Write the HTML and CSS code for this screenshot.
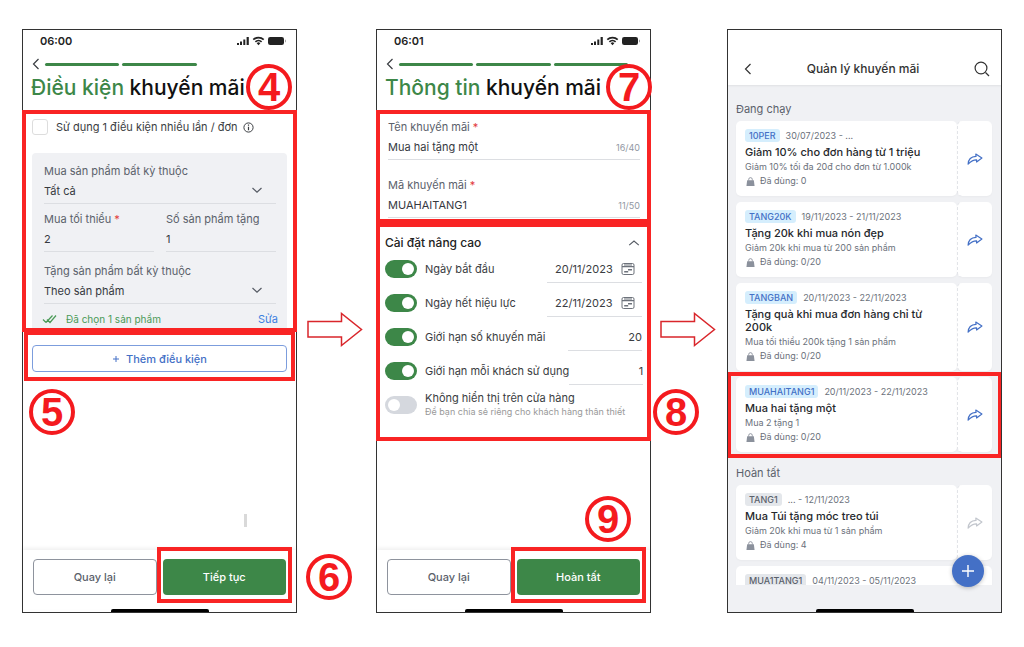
FILE: index.html
```html
<!DOCTYPE html>
<html lang="vi">
<head>
<meta charset="utf-8">
<meta name="viewport" content="width=device-width, initial-scale=1">
<title>Quản lý khuyến mãi</title>
<link rel="stylesheet" href="styles.css">
</head>
<body>
<svg class="sprite" aria-hidden="true">
  <symbol id="status" viewBox="0 0 50 12">
    <path d="M0 8h2v2H0zM3 6.500h2V10H3zM6.300 4.500h2V10h-2zM9.600 2h2.200v8H9.600z"/>
    <path d="M16.300 4.700a7.400 7.400 0 0 1 10.400 0M18.400 6.900a4.400 4.400 0 0 1 6.200 0" fill="none" stroke="currentColor" stroke-width="1.700"/>
    <path d="M19.700 8.300a2.500 2.500 0 0 1 3.600 0L21.500 10.200z"/>
    <rect x="31" y="2" width="16" height="8" rx="2.200"/>
    <path d="M48 4.500v3c1.200-.4 1.200-2.600 0-3z" opacity=".5"/>
  </symbol>
  <symbol id="back" viewBox="0 0 8 12"><path d="M6.500 1 1.500 6l5 5" fill="none" stroke="currentColor" stroke-width="1.200"/></symbol>
  <symbol id="down" viewBox="0 0 12 8"><path d="M1.500 2 6 6.200 10.500 2" fill="none" stroke="currentColor" stroke-width="1.200"/></symbol>
  <symbol id="up" viewBox="0 0 12 8"><path d="M1.200 6.200 6 2l4.800 4.200" fill="none" stroke="currentColor" stroke-width="1.100"/></symbol>
  <symbol id="calendar" viewBox="0 0 14 14"><g fill="none" stroke="currentColor"><rect x="1" y="1.500" width="12" height="11" rx="1.500"/><path d="M1 4.700h12M3 3h8" stroke-width="1.200"/><path d="M3.200 9.800h4M7 7.800h4" stroke-width="1.500"/></g></symbol>
  <symbol id="bag" viewBox="0 0 10 10"><path d="M3 4V2.700a2 2 0 0 1 4 0V4" fill="none" stroke="currentColor"/><path d="M1.300 3.500h7.400L9.500 10h-9z"/></symbol>
  <symbol id="share" viewBox="0 0 16 12"><path d="M8.800 1 14.900 5 9.600 9V6.900C6 6.700 4 8.300 1.100 11.200 1.300 6.700 4 3.700 9 3.400z" fill="none" stroke="currentColor" stroke-width="1.200" stroke-linejoin="round"/></symbol>
  <symbol id="arrow" viewBox="0 0 56 36"><path d="M1 9.500h33.500V1.500L54.500 17.500 34.500 33.500V25H1z" fill="none" stroke="#d9262b" stroke-width="1.500"/></symbol>
</svg>
<main class="flow">
  <section class="phone">
    <header>
      <div class="status"><span>06:00</span><svg class="status-icons"><use href="#status"/></svg></div>
      <div class="progress"><button class="plain" aria-label="Quay lại"><svg class="i-back"><use href="#back"/></svg></button><i class="bar"></i><i class="bar"></i><i></i></div>
      <h1 class="title"><em>Điều kiện</em> khuyến mãi</h1>
      <b class="step step-4">4</b>
    </header>
    <form class="region conditions">
      <label class="check"><input type="checkbox"><span>Sử dụng 1 điều kiện nhiều lần / đơn</span><svg class="i-info" viewBox="0 0 11 11"><circle cx="5.500" cy="5.500" r="4.600" fill="none" stroke="currentColor"/><path d="M5.500 2.500v1.300M5.500 4.800v3.400" stroke="currentColor" stroke-width="1.200"/></svg></label>
      <div class="panel">
        <label class="field"><span>Mua sản phẩm bất kỳ thuộc</span><span class="pick"><select><option>Tất cả</option></select><svg class="i-down"><use href="#down"/></svg></span></label>
        <div class="pair">
          <label class="field"><span>Mua tối thiểu <sup>*</sup></span><input type="text" value="2"></label>
          <label class="field"><span>Số sản phẩm tặng</span><input type="text" value="1"></label>
        </div>
        <label class="field gift"><span>Tặng sản phẩm bất kỳ thuộc</span><span class="pick"><select><option>Theo sản phẩm</option></select><svg class="i-down"><use href="#down"/></svg></span></label>
        <div class="chosen"><svg class="i-checks" viewBox="0 0 15 10"><path d="M1 5.500l3 3M5 5.500l3 3L14 1.500M4 8.500 10.500 1.500" fill="none" stroke="currentColor" stroke-width="1.200"/></svg><span>Đã chọn 1 sản phẩm</span><a href="#sua">Sửa</a></div>
      </div>
    </form>
    <div class="region add">
      <button class="add-button"><svg class="i-plus" viewBox="0 0 8 8"><path d="M4 1v6M1 4h6" stroke="currentColor"/></svg>Thêm điều kiện</button>
      <b class="step step-5">5</b>
    </div>
    <i class="handle"></i>
    <footer class="actions">
      <button class="secondary">Quay lại</button>
      <span class="region primary-wrap"><button class="primary">Tiếp tục</button><b class="step step-6">6</b></span>
    </footer>
    <i class="home"></i>
  </section>

  <svg class="arrow"><use href="#arrow"/></svg>

  <section class="phone">
    <header>
      <div class="status"><span>06:01</span><svg class="status-icons"><use href="#status"/></svg></div>
      <div class="progress"><button class="plain" aria-label="Quay lại"><svg class="i-back"><use href="#back"/></svg></button><i class="bar"></i><i class="bar"></i><i class="bar"></i></div>
      <h1 class="title"><em>Thông tin</em> khuyến mãi</h1>
      <b class="step step-7">7</b>
    </header>
    <form class="region info">
      <label class="field"><span>Tên khuyến mãi <sup>*</sup></span><span class="counted"><input type="text" value="Mua hai tặng một"><small>16/40</small></span></label>
      <label class="field"><span>Mã khuyến mãi <sup>*</sup></span><span class="counted"><input type="text" value="MUAHAITANG1"><small>11/50</small></span></label>
    </form>
    <form class="region advanced">
      <h2 class="advanced-head">Cài đặt nâng cao<button type="button" class="plain" aria-label="Thu gọn"><svg class="i-down"><use href="#up"/></svg></button></h2>
      <div class="setting"><input class="toggle" type="checkbox" id="t1" checked><label for="t1">Ngày bắt đầu</label><span class="date"><input type="text" aria-label="Ngày bắt đầu" value="20/11/2023"><svg class="i-cal"><use href="#calendar"/></svg></span></div>
      <div class="setting"><input class="toggle" type="checkbox" id="t2" checked><label for="t2">Ngày hết hiệu lực</label><span class="date"><input type="text" aria-label="Ngày hết hiệu lực" value="22/11/2023"><svg class="i-cal"><use href="#calendar"/></svg></span></div>
      <div class="setting"><input class="toggle" type="checkbox" id="t3" checked><label for="t3">Giới hạn số khuyến mãi</label><input class="amount" type="text" aria-label="Giới hạn số khuyến mãi" value="20"></div>
      <div class="setting"><input class="toggle" type="checkbox" id="t4" checked><label for="t4">Giới hạn mỗi khách sử dụng</label><input class="amount" type="text" aria-label="Giới hạn mỗi khách sử dụng" value="1"></div>
      <div class="setting"><input class="toggle" type="checkbox" id="t5"><label for="t5">Không hiển thị trên cửa hàng<small>Để bạn chia sẻ riêng cho khách hàng thân thiết</small></label></div>
      <b class="step step-8">8</b>
    </form>
    <footer class="actions">
      <button class="secondary">Quay lại</button>
      <span class="region primary-wrap"><button class="primary">Hoàn tất</button><b class="step step-9">9</b></span>
    </footer>
    <i class="home"></i>
  </section>

  <svg class="arrow"><use href="#arrow"/></svg>

  <section class="phone manage">
    <header class="manage-head">
      <button class="plain" aria-label="Quay lại"><svg class="i-back"><use href="#back"/></svg></button>
      <h1>Quản lý khuyến mãi</h1>
      <button class="plain" aria-label="Tìm kiếm"><svg class="i-search" viewBox="0 0 16 16"><path d="M11.500 11.500 15 15" stroke="currentColor" stroke-width="1.200"/><circle cx="7" cy="7" r="5.900" fill="none" stroke="currentColor" stroke-width="1.200"/></svg></button>
    </header>
    <div class="list">
      <h2>Đang chạy</h2>
      <article class="promo"><div class="body"><p class="meta"><mark>10PER</mark>30/07/2023 - ...</p><h3>Giảm 10% cho đơn hàng từ 1 triệu</h3><p>Giảm 10% tối đa 20đ cho đơn từ 1.000k</p><p class="used"><svg class="i-bag"><use href="#bag"/></svg>Đã dùng: 0</p></div><button class="share" aria-label="Chia sẻ"><svg class="i-share"><use href="#share"/></svg></button></article>
      <article class="promo"><div class="body"><p class="meta"><mark>TANG20K</mark>19/11/2023 - 21/11/2023</p><h3>Tặng 20k khi mua nón đẹp</h3><p>Giảm 20k khi mua từ 200 sản phẩm</p><p class="used"><svg class="i-bag"><use href="#bag"/></svg>Đã dùng: 0/20</p></div><button class="share" aria-label="Chia sẻ"><svg class="i-share"><use href="#share"/></svg></button></article>
      <article class="promo"><div class="body"><p class="meta"><mark>TANGBAN</mark>20/11/2023 - 22/11/2023</p><h3>Tặng quà khi mua đơn hàng chỉ từ 200k</h3><p>Mua tối thiểu 200k tặng 1 sản phẩm</p><p class="used"><svg class="i-bag"><use href="#bag"/></svg>Đã dùng: 0/20</p></div><button class="share" aria-label="Chia sẻ"><svg class="i-share"><use href="#share"/></svg></button></article>
      <article class="promo region"><div class="body"><p class="meta"><mark>MUAHAITANG1</mark>20/11/2023 - 22/11/2023</p><h3>Mua hai tặng một</h3><p>Mua 2 tặng 1</p><p class="used"><svg class="i-bag"><use href="#bag"/></svg>Đã dùng: 0/20</p></div><button class="share" aria-label="Chia sẻ"><svg class="i-share"><use href="#share"/></svg></button></article>
      <h2 class="ended-title">Hoàn tất</h2>
      <article class="promo ended"><div class="body"><p class="meta"><mark>TANG1</mark>... - 12/11/2023</p><h3>Mua Túi tặng móc treo túi</h3><p>Giảm 20k khi mua từ 1 sản phẩm</p><p class="used"><svg class="i-bag"><use href="#bag"/></svg>Đã dùng: 4</p></div><button class="share" aria-label="Chia sẻ"><svg class="i-share"><use href="#share"/></svg></button></article>
      <article class="promo ended"><div class="body"><p class="meta"><mark>MUA1TANG1</mark>04/11/2023 - 05/11/2023</p></div><button class="share" aria-label="Chia sẻ"></button></article>
    </div>
    <button class="fab" aria-label="Thêm khuyến mãi"><svg class="i-fab" viewBox="0 0 12 12"><path d="M6 0v12M0 6h12" stroke="currentColor" stroke-width="1.400"/></svg></button>
    <i class="home"></i>
  </section>
</main>
</body>
</html>
```
FILE: styles.css
```css
* { box-sizing: border-box; }
body {
  margin: 0;
  background: #fff;
  color: #3a3d42;
  font: 400 11px/18px Inter, "Noto Sans", sans-serif;
}
svg { display: block; flex: none; fill: currentColor; }
.sprite { display: none; }
h1, h2, h3, p { margin: 0; font-size: inherit; font-weight: 500; }
p { font-weight: 400; }
input, select, button { font: inherit; color: inherit; margin: 0; padding: 0; border: 0; background: none; border-radius: 0; min-width: 0; }
select, input { appearance: none; outline: 0; width: 100%; }
.plain { display: flex; }

.flow {
  display: grid;
  grid-template-columns: 1fr 79px 1fr 76px 1fr;
  height: 100vh;
  min-height: 647px;
  padding: 29px 22px 34px;
}
.phone {
  position: relative;
  display: flex;
  flex-direction: column;
  min-width: 0;
  min-height: 0;
  border: 1px solid #333;
}
.phone header { position: relative; }
.arrow { width: 56px; height: 36px; place-self: center; margin: 18px 3px 0 0; }

/* Red annotations */
.region { position: relative; }
.region::after {
  content: "";
  position: absolute;
  inset: 0 -1px;
  border: 4px solid #f92424;
  pointer-events: none;
}
.add::after { inset: -1px 1px 0; }
.primary-wrap::after { inset: -12px -6px -8px; }
.promo.region::after { inset: -5px -10px -6px -9px; }
.step {
  position: absolute;
  z-index: 2;
  width: 46px;
  height: 46px;
  border: 4px solid #f41a1e;
  border-radius: 50%;
  color: #f41a1e;
  font: 700 40px/38px "Liberation Sans", Arial, sans-serif;
  text-align: center;
}
.step-4 { right: 4px; bottom: 0; }
.step-5 { left: 6px; top: 57px; }
.step-6 { right: -66px; top: -5px; }
.step-7 { right: -2px; bottom: 0; }
.step-8 { right: -49px; bottom: 6px; }
.step-9 { right: 9px; top: -63px; }

/* Wizard header */
.status {
  display: flex;
  justify-content: space-between;
  align-items: center;
  height: 22px;
  padding: 0 9px 0 17px;
  color: #222;
  font-weight: 600;
}
.status-icons { width: 50px; height: 12px; }
.progress {
  display: grid;
  grid-template-columns: 10px 1fr 1fr 1fr;
  gap: 3px;
  align-items: center;
  height: 24px;
  padding: 0 22px 0 9px;
}
.bar { height: 3px; border-radius: 2px; background: #3d8748; }
.i-back { width: 8px; height: 12px; }
.title {
  margin-bottom: 10px;
  padding-left: 8px;
  color: #111;
  font-size: 21px;
  font-weight: 500;
  line-height: 24px;
  white-space: nowrap;
}
.title em { color: #3d8748; font-style: normal; }

/* Form fields */
.conditions { padding: 9px 9px 0; }
.check { display: flex; align-items: center; gap: 8px; height: 16px; margin-bottom: 18px; }
.check input { width: 16px; height: 16px; border: 1px solid #ddd; border-radius: 3px; }
.check svg { margin-left: -3px; }
.i-info { width: 11px; height: 11px; }
.panel { padding: 9px 11px 5px 12px; background: #f0f1f4; border-radius: 4px 4px 0 0; }
.field { display: block; min-width: 0; color: #5b616b; }
.field > span:first-child { display: block; white-space: nowrap; }
.field sup { color: #e23a3a; font-size: inherit; line-height: 1; vertical-align: baseline; }
.field input, .field select { height: 24px; padding-bottom: 2px; border-bottom: 1px solid #dcdee2; color: #36393f; }
.pair { display: grid; grid-template-columns: 1fr 1fr; gap: 12px; margin: 6px 0 10px; }
.pick, .counted { display: grid; align-items: center; }
.pick > *, .counted > * { grid-area: 1 / 1; }
.pick svg { justify-self: end; margin: 0 13px 4px 0; pointer-events: none; }
.i-down { width: 12px; height: 8px; color: #555a63; }
.counted small { justify-self: end; color: #9298a3; font-size: 9px; }
.chosen { display: flex; align-items: center; height: 16px; margin: 7px -2px 0; color: #4a9a57; font-size: 10px; }
.i-checks { width: 15px; height: 10px; margin-right: 9px; }
.chosen a { margin-left: auto; color: #3e7fe0; font-size: 11px; text-decoration: none; }
.add { padding: 13px 9px 9px; }
.add-button {
  display: flex;
  align-items: center;
  justify-content: center;
  gap: 6px;
  width: 100%;
  height: 27px;
  border: 1px solid #7c9ddd;
  border-radius: 4px;
  color: #4470c6;
  font-weight: 500;
}
.i-plus { width: 8px; height: 8px; }
.handle { align-self: flex-end; width: 3px; height: 13px; margin: auto 49px 23px 0; background: #d9d9d9; }

.info { display: grid; gap: 16px; padding: 8px 10px 5px 11px; }
.advanced { padding: 11px 8px 19px; }
.advanced-head { display: flex; align-items: center; justify-content: space-between; padding-right: 2px; color: #222; font-size: 12px; }
.setting { display: flex; align-items: center; height: 34px; }
.setting label { flex: 1; margin-left: 8px; white-space: nowrap; line-height: 13px; }
.setting small { display: block; color: #999; font-size: 9px; }
.toggle { flex: none; width: 32px; height: 18px; border-radius: 9px; background: #d5d8de; }
.toggle::before { content: ""; display: block; width: 12px; height: 12px; margin: 3px; border-radius: 50%; background: #fff; }
.toggle:checked { background: #3d8748; }
.toggle:checked::before { margin-left: 17px; }
.date, .amount { flex: none; height: 28px; border-bottom: 1px solid #dcdee2; }
.date { display: flex; align-items: center; gap: 8px; width: 95px; padding: 0 7px 0 8px; }
.i-cal { width: 14px; height: 14px; color: #6d727b; }
.amount { width: 74px; text-align: right; }

.actions {
  display: grid;
  grid-template-columns: 1fr 1fr;
  gap: 6px;
  margin-top: auto;
  padding: 9px 10px 14px;
  box-shadow: 0 -2px 4px #00000010;
}
.handle + .actions { margin-top: 0; }
.actions button { width: 100%; height: 36px; border-radius: 4px; font-weight: 500; }
.actions .secondary { border: 1px solid #8e939d; color: #5b616b; }
.primary { display: block; background: #3d8748; color: #fff; }
.home { flex: none; align-self: center; width: 98px; height: 3px; border-radius: 2px 2px 0 0; background: #000; }

/* Promotion list */
.manage { background: #f0f1f4; }
.manage-head {
  display: flex;
  align-items: center;
  justify-content: space-between;
  padding: 30px 11px 7px 16px;
  background: #fff;
  color: #333;
  font-size: 12px;
  box-shadow: 0 1px 2px #00000012;
}
.i-search { width: 16px; height: 16px; }
.list { flex: 1 1 0; min-height: 0; margin-bottom: 24px; padding: 15px 9px 0 8px; overflow: hidden; }
.list h2 { margin-bottom: 3px; color: #5b616b; font-weight: 400; }
.list .ended-title { margin-top: 12px; }
.promo { display: grid; grid-template-columns: 1fr 35px; margin-bottom: 6px; }
.body, .share { border-radius: 5px; background: #fff; box-shadow: 0 1px 2px #00000008; }
.body { padding: 8px 9px 9px; color: #6b717b; font-size: 9px; line-height: 12px; }
.meta { display: flex; align-items: center; gap: 6px; height: 13px; }
.meta mark { padding: 0 4px; border-radius: 3px; background: #d5eefd; color: #4470c6; line-height: 13px; font-weight: 500; }
.body h3 { margin: 4px 0 2px; color: #25282c; font-size: 11px; line-height: 13px; }
.used { display: flex; align-items: center; gap: 5px; margin-top: 2px; padding-left: 1px; }
.i-bag { width: 9px; height: 9px; color: #8b919c; }
.share { display: grid; place-items: center; border-left: 1px dashed #e2e4e8; color: #4470c6; }
.i-share { width: 16px; height: 12px; }
.ended mark { background: #e4e7eb; color: #5b616b; }
.ended .share { color: #c2c6cd; }
.fab {
  position: absolute;
  right: 17px;
  bottom: 25px;
  display: grid;
  place-items: center;
  width: 32px;
  height: 32px;
  border-radius: 50%;
  background: #4470c6;
  color: #fff;
  box-shadow: 0 1px 4px #00000040;
}
.i-fab { width: 12px; height: 12px; }
```
